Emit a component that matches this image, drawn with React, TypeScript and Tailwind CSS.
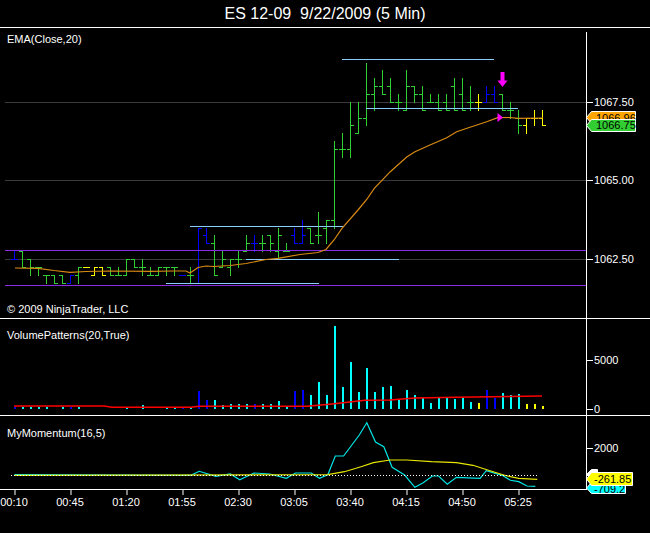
import React from "react";

type Col = "G" | "B" | "Y";
// [high, low, open, close] in ticks above 1062.50
type Bar = [number, number, number, number, Col];

const BARS: Bar[] = [
  [1, 0, 0, 0, "B"], [1, -1, 1, -1, "G"], [0, -2, 0, -1, "G"], [-1, -2, -1, -1, "G"],
  [-2, -3, -2, -2, "G"], [-2, -3, -2, -3, "G"], [-2, -3, -2, -3, "G"], [-2, -3, -3, -2, "B"],
  [-1, -3, -2, -1, "G"], [-1, -1, -1, -1, "Y"], [-1, -2, -2, -1, "Y"], [-1, -2, -1, -2, "Y"],
  [-1, -2, -1, -2, "G"], [-1, -2, -2, -2, "G"], [0, -2, -2, 0, "G"], [0, -1, 0, -1, "G"],
  [0, -2, -1, -1, "G"], [-1, -2, -2, -2, "G"], [-1, -2, -2, -1, "G"], [-1, -2, -1, -1, "G"],
  [-1, -2, -1, -1, "G"], [-2, -2, -2, -2, "B"], [-1, -3, -2, -2, "G"], [4, -3, -3, 4, "B"],
  [4, 2, 3, 2, "B"], [3, -2, 2, -2, "G"], [1, -1, -1, 0, "G"], [0, -2, -1, 0, "G"],
  [1, -1, 0, 0, "G"], [3, 1, 1, 2, "G"], [3, 1, 2, 2, "B"], [3, 1, 2, 2, "G"],
  [3, 1, 3, 2, "G"], [4, 0, 1, 3, "G"], [2, 1, 1, 1, "G"], [4, 2, 3, 2, "B"],
  [5, 2, 2, 3, "B"], [4, 2, 4, 2, "G"], [6, 2, 3, 3, "G"], [5, 2, 4, 5, "G"],
  [15, 4, 5, 14, "G"], [16, 13, 14, 14, "G"], [20, 13, 14, 17, "G"], [20, 16, 16, 18, "G"],
  [25, 17, 18, 21, "G"], [23, 19, 21, 22, "G"], [24, 21, 22, 21, "G"], [23, 20, 22, 20, "G"],
  [21, 19, 20, 20, "G"], [24, 19, 19, 22, "G"], [22, 20, 22, 21, "G"], [22, 19, 21, 19, "G"],
  [21, 20, 20, 20, "G"], [21, 19, 20, 19, "G"], [21, 19, 20, 19, "G"], [23, 19, 22, 19, "G"],
  [23, 19, 21, 19, "G"], [22, 19, 20, 20, "G"], [21, 19, 20, 20, "Y"], [22, 20, 20, 21, "B"],
  [22, 20, 21, 20, "B"], [21, 19, 21, 19, "G"], [20, 18, 19, 19, "G"], [19, 16, 18, 17, "G"],
  [18, 16, 17, 18, "Y"], [19, 17, 18, 18, "Y"], [19, 17, 18, 17, "Y"],
];

const VOLS = [
  2, 2, 2, 2, 2, 0, 2, 2, 2, 0, 0, 0, 0, 0, 2, 0, 4, 0, 0, 2, 2, 2, 2, 18, 9, 9, 4, 5, 5, 5,
  5, 5, 5, 8, 3, 18, 19, 14, 27, 14, 83, 22, 47, 17, 41, 17, 22, 23, 10, 19, 14, 11, 6, 12,
  11, 10, 11, 7, 6, 19, 11, 16, 14, 15, 5, 5, 3,
];

const BAR_COL: Record<Col, string> = { G: "#32cd32", B: "#0000ff", Y: "#ffff00" };
const VOL_COL: Record<Col, string> = { G: "#00ffff", B: "#0000ff", Y: "#ffff00" };

const bx = (i: number) => 14 + 8 * i;
const py = (t: number) => Math.round(259 - t * 7.86);

// [x1, y, x2]
const LEVELS = [
  [342, 59, 494], [366, 108, 518], [190, 226, 343], [246, 259, 399], [166, 283, 319],
];

const EMA = [
  [15, 268], [38, 268.3], [54, 270.5], [70, 272.3], [86, 271.5], [110, 271], [150, 271.3],
  [174, 271], [186, 271], [190, 273], [198, 267.5], [206, 266], [214, 266.5], [230, 265.5],
  [246, 263.5], [266, 259.5], [278, 258.3], [300, 254.5], [318, 252.5], [326, 249.5],
  [334, 240], [342, 228.3], [358, 210], [366.7, 199.5], [374.3, 188.3], [390.3, 171.7],
  [406.7, 157], [415, 151.7], [430, 145], [446.7, 137.7], [456.7, 131.7], [470, 127.3],
  [486.7, 121.7], [497.7, 117.7], [510, 117.5], [518, 118.3], [543, 118],
];

const VOL_AVG = [
  [14, 406], [104, 406], [112, 407.3], [191, 407.3], [199, 406.3], [307, 406.3], [332, 404],
  [365, 400.3], [390, 400], [415, 398], [456, 397.3], [542, 396],
];

const MOM = [
  [14.5, 474.7], [190.9, 475.3], [199.2, 471.3], [215.8, 476.3], [230.3, 474], [239.8, 479.7],
  [253.9, 473], [269.7, 474], [286.3, 478.3], [295.4, 473], [311.2, 473], [319.5, 478.3],
  [327.8, 474.7], [335.3, 456], [343.6, 456], [359.3, 435], [366.8, 422.7], [375.5, 442],
  [383.8, 446.7], [392.1, 467.3], [404.6, 475], [414.9, 487.3], [423.2, 482.7], [432.4, 476],
  [438.6, 476], [447.3, 484.3], [456.4, 477.3], [480.1, 478.3], [486.3, 470.7], [502.1, 475.3],
  [510.4, 480.3], [518.7, 481.7], [527, 486], [535.3, 486.3],
];

const MOM_AVG = [
  [14.5, 475.3], [327.8, 474.7], [344.4, 471.7], [361, 466.7], [373.4, 462.7], [390, 460],
  [406.6, 460], [431.5, 461.7], [456.4, 462.7], [473, 465.3], [487.6, 470], [506.2, 475.7],
  [518.7, 478.3], [537.3, 479.3],
];

const TIMES = ["00:10", "00:45", "01:20", "01:55", "02:30", "03:05", "03:40", "04:15", "04:50", "05:25"];

const pts = (a: number[][]) => a.map(p => p.join(",")).join(" ");

function PricePlot() {
  return (
    <svg width={586} height={290} viewBox="0 28 586 290" className="block" shapeRendering="crispEdges">
      {[20, 10, 0].map(t => (
        <rect key={t} x={5} y={py(t)} width={581} height={1} fill="#3a3a3a" />
      ))}
      {BARS.map(([h, l, o, c, col], i) => {
        const x = bx(i);
        return (
          <g key={i} fill={BAR_COL[col]}>
            <rect x={x} y={py(h)} width={1} height={py(l) - py(h) + 1} />
            <rect x={x - 3} y={py(o)} width={3} height={1} />
            <rect x={x + 1} y={py(c)} width={3} height={1} />
          </g>
        );
      })}
      <rect x={5} y={250} width={581} height={1} fill="#8a2be2" />
      <rect x={5} y={285} width={581} height={1} fill="#8a2be2" />
      {LEVELS.map(([x1, y, x2]) => (
        <rect key={`${x1}-${y}`} x={x1} y={y} width={x2 - x1} height={1} fill="#87cefa" />
      ))}
      <polyline points={pts(EMA)} fill="none" stroke="#d98a12" strokeWidth={1.2} shapeRendering="auto" />
      {/* signal arrows */}
      <g fill="#ff00ff" shapeRendering="auto">
        <rect x={500.5} y={72} width={4} height={9} />
        <polygon points="497.5,80.5 507.5,80.5 502.5,87" />
        <polygon points="497.5,113 497.5,122 503,117.5" />
      </g>
    </svg>
  );
}

function VolumePlot() {
  return (
    <svg width={586} height={96} viewBox="0 319 586 96" className="block" shapeRendering="crispEdges">
      {VOLS.map((v, i) =>
        v > 0 ? (
          <rect key={i} x={bx(i)} y={409 - v} width={2} height={v} fill={VOL_COL[BARS[i][4]]} />
        ) : null
      )}
      <polyline points={pts(VOL_AVG)} fill="none" stroke="#ff0000" strokeWidth={1.6} shapeRendering="auto" />
    </svg>
  );
}

function MomentumPlot() {
  return (
    <svg width={586} height={73} viewBox="0 416 586 73" className="block">
      <polyline points={pts(MOM)} fill="none" stroke="#00e5e5" strokeWidth={1.2} />
      <polyline points={pts(MOM_AVG)} fill="none" stroke="#e6e600" strokeWidth={1.2} />
      <line x1={11} y1={475.5} x2={538} y2={475.5} stroke="#ffffff" strokeWidth={1} strokeDasharray="1 2" shapeRendering="crispEdges" />
    </svg>
  );
}

function TagShape({ w, h, fill }: { w: number; h: number; fill: string }) {
  const m = h / 2;
  return (
    <svg width={w} height={h} className="absolute inset-0">
      <polygon
        points={`0.5,${m} 5.5,0.5 ${w - 0.5},0.5 ${w - 0.5},${h - 0.5} 5.5,${h - 0.5}`}
        fill={fill}
        stroke="#ffffff"
        strokeWidth={1}
      />
    </svg>
  );
}

// tick mark plus value, one row of an axis
function AxisLabel({ className, children }: { className: string; children: React.ReactNode }) {
  return (
    <div className={`absolute left-0 flex items-center gap-[1px] ${className}`}>
      <div className="w-[6px] h-px bg-white" />
      <span>{children}</span>
    </div>
  );
}

export default function App() {
  return (
    <div className="w-[650px] h-[533px] bg-black text-white overflow-hidden font-['Liberation_Sans',Arial,sans-serif] flex flex-col">
      <div className="h-[27px] flex items-center justify-center text-[16px] whitespace-pre">
        ES 12-09  9/22/2009 (5 Min)
      </div>
      <div className="h-px bg-white" />

      {/* price panel */}
      <div className="flex h-[290px]">
        <div className="relative w-[586px]">
          <PricePlot />
          <div className="absolute left-[7px] top-[5px] text-[11px] leading-[13px]">EMA(Close,20)</div>
          <div className="absolute left-[7px] top-[275px] text-[11px] leading-[13px]">© 2009 NinjaTrader, LLC</div>
        </div>
        <div className="w-px mt-[4px] bg-white" />
        <div className="relative flex-1 text-[11px] leading-[13px]">
          <AxisLabel className="top-[68px]">1067.50</AxisLabel>
          <AxisLabel className="top-[146px]">1065.00</AxisLabel>
          <AxisLabel className="top-[225px]">1062.50</AxisLabel>

          <div className="absolute -left-px top-[83px] w-[50px] h-[13px]">
            <TagShape w={50} h={13} fill="#ffa500" />
            <span className="absolute left-[10px] top-[1px] leading-[13px] text-black">1066.96</span>
          </div>
          <div className="absolute -left-px top-[91px] w-[50px] h-[13px]">
            <TagShape w={50} h={13} fill="#32cd32" />
            <span className="absolute left-[10px] top-0 leading-[13px] text-black">1066.75</span>
          </div>
        </div>
      </div>
      <div className="h-px bg-white" />

      {/* volume panel */}
      <div className="flex h-[96px]">
        <div className="relative w-[586px]">
          <VolumePlot />
          <div className="absolute left-[7px] top-[10px] text-[11px] leading-[13px]">VolumePatterns(20,True)</div>
        </div>
        <div className="w-px bg-white" />
        <div className="relative flex-1 text-[11px] leading-[13px]">
          <AxisLabel className="top-[35px]">5000</AxisLabel>
          <AxisLabel className="top-[84px]">0</AxisLabel>
        </div>
      </div>
      <div className="h-px bg-white" />

      {/* momentum panel */}
      <div className="flex h-[74px]">
        <div className="relative w-[586px] border-b border-white">
          <MomentumPlot />
          <div className="absolute left-[7px] top-[11px] text-[11px] leading-[13px]">MyMomentum(16,5)</div>
        </div>
        <div className="w-px bg-white" />
        <div className="relative flex-1 text-[11px] leading-[13px]">
          <AxisLabel className="top-[26px]">2000</AxisLabel>

          <div className="absolute -left-px top-[53px] w-[12px] h-[11px]">
            <TagShape w={12} h={11} fill="#ffffff" />
          </div>
          <div className="absolute -left-px top-[66px] w-[40px] h-[12px]">
            <TagShape w={40} h={12} fill="#00ffff" />
            <span className="absolute left-[8px] top-[1px] leading-[12px] text-black">-709.2</span>
          </div>
          <div className="absolute -left-px top-[56px] w-[47px] h-[14px]">
            <TagShape w={47} h={14} fill="#ffff00" />
            <span className="absolute left-[8px] top-0 leading-[14px] text-black">-261.85</span>
          </div>
        </div>
      </div>

      {/* time axis: one 56px slot per 35 minutes */}
      <div className="flex -ml-[14px] text-[11px] leading-[13px]">
        {TIMES.map(t => (
          <div key={t} className="w-[56px] shrink-0 flex flex-col items-center">
            <div className="w-px h-[5px] bg-white translate-x-[0.5px]" />
            <span className="mt-px">{t}</span>
          </div>
        ))}
      </div>
    </div>
  );
}
